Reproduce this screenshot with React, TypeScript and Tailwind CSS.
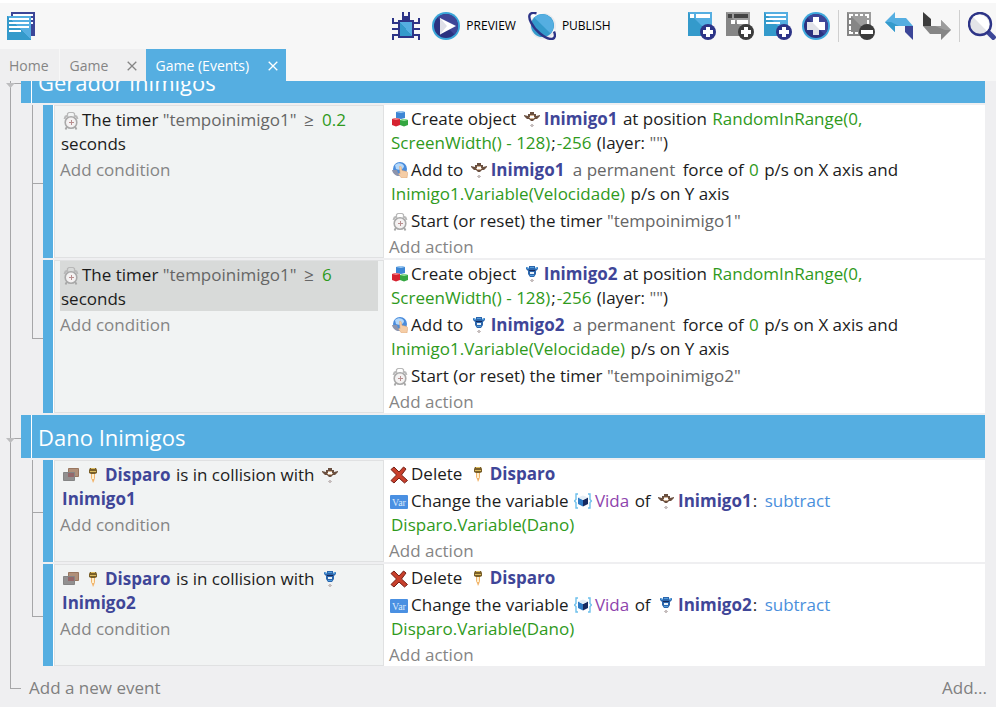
import type { ReactNode } from "react";

/* ---------- toolbar icons ---------- */

const big = { width: 28, height: 28, viewBox: "0 0 28 28", "aria-hidden": true, className: "block shrink-0" } as const;

function EventsIcon() {
  return (
    <svg {...big} shapeRendering="crispEdges">
      <path fill="#3c4698" d="M4 0h24v24H4z" />
      <path fill="#fff" d="M6 2h20v2H6zM24 6h2v2h-2zM24 10h2v2h-2z" />
      <path fill="#349acb" d="M0 4h24v24H0z" />
      <path fill="#55aee1" d="M0 4h24v24z" />
      <path fill="#fff" d="M2 6h20v2H2zM2 10h20v2H2zM2 14h20v2H2zM2 18h12v2H2z" />
    </svg>
  );
}

function BugIcon() {
  return (
    <svg {...big} shapeRendering="crispEdges">
      <path
        fill="#2d3487"
        d="M6 8h4V0h2v4h4V0h2v8h4v2h4V6h2v6h-6v4h6v2h-6v4h6v6h-2v-4h-4v2H6v-2H2v4H0v-6h6v-4H0v-2h6v-4H0V6h2v4h4z"
      />
      <path fill="#349acb" d="M8 10h12v14H8z" />
      <path fill="#55aee1" d="M8 10h12v14z" />
    </svg>
  );
}

function PlayIcon() {
  return (
    <svg {...big}>
      <circle cx="14" cy="14" r="14" fill="#3aa5d8" />
      <circle cx="14" cy="14" r="12" fill="#2b3280" />
      <path d="M5.5 5.500A12 12 0 0 1 22.500 22.500z" fill="#3f4698" />
      <path d="M8 6l16 8-16 8.500z" fill="#fff" />
      <path d="M8 6v16.500l7-8.500z" fill="#dfe0e8" />
    </svg>
  );
}

function PlanetIcon() {
  return (
    <svg {...big}>
      <circle cx="15" cy="14" r="13" fill="#e9e9ed" />
      <path d="M3 4C8 0 20 0 25 8l2 14z" fill="#fff" />
      <circle cx="14.500" cy="13.500" r="11.500" fill="#349acb" />
      <path d="M6.300 5.400A11.500 11.500 0 0 1 22.600 21.600z" fill="#55aee1" />
      <path
        d="M8.500 1.300C1.500-.3-.5 3.500 3 10.500c4 8 14 16.500 20.500 16.500 4 0 4-4 2.500-7.500"
        fill="none"
        stroke="#2d3487"
        strokeWidth="2.400"
      />
    </svg>
  );
}

function PlusBadge({ color }: { color: string }) {
  return (
    <g>
      <circle cx="20" cy="20" r="8" fill={color} />
      <path fill="#fff" d="M18 15h4v3h3v4h-3v3h-4v-3h-3v-4h3z" />
    </g>
  );
}

function AddEventIcon() {
  return (
    <svg {...big}>
      <path fill="#349acb" d="M0 0h24v24H0z" />
      <path fill="#55aee1" d="M0 0h24v24z" />
      <path fill="#fff" d="M2 2h4v4H2zM8 2h14v4H8z" />
      <PlusBadge color="#2d3487" />
    </svg>
  );
}

function AddSubEventIcon() {
  return (
    <svg {...big}>
      <path fill="#868686" d="M0 0h24v24H0z" />
      <path fill="#9c9c9c" d="M0 0h24v24z" />
      <path fill="#444" d="M2 2h4v4H2zM8 2h14v4H8z" />
      <path fill="#fff" d="M5 8h4v4H5zM11 8h11v4H11z" />
      <PlusBadge color="#3c3c3c" />
    </svg>
  );
}

function AddCommentIcon() {
  return (
    <svg {...big}>
      <path fill="#349acb" d="M0 0h24v24H0z" />
      <path fill="#55aee1" d="M0 0h24v24z" />
      <path fill="#fff" d="M2 2h20v2H2zM2 6h20v2H2zM2 10h14v2H2z" />
      <PlusBadge color="#2d3487" />
    </svg>
  );
}

function AddOtherIcon() {
  return (
    <svg {...big}>
      <circle cx="14" cy="14" r="14" fill="#3fa8dc" />
      <circle cx="14" cy="14" r="12" fill="#2b3280" />
      <path d="M5.500 5.500A12 12 0 0 1 22.500 22.500z" fill="#3f4698" />
      <path fill="#fff" d="M11 5h6v5h6v8h-6v5h-6v-5H5v-8h6z" />
      <path fill="#e1e2e8" d="M5 10h5l8 8h-1v5h-6v-5H5z" />
    </svg>
  );
}

function RemoveIcon() {
  return (
    <svg {...big}>
      <path fill="#868686" d="M0 0h24v24H0z" />
      <path fill="#9c9c9c" d="M0 0h24v24z" />
      <path
        fill="none"
        stroke="#fff"
        strokeWidth="2"
        d="M3 6V3h3M8 3h3M13 3h3M18 3h3v3M3 8v4M3 14v4M3 19v2h3M8 21h3M21 8v4"
      />
      <circle cx="20" cy="20" r="8" fill="#3c3c3c" />
      <path fill="#fff" d="M14 18h12v4H14z" />
    </svg>
  );
}

function UndoIcon() {
  return (
    <svg {...big}>
      <path fill="#3c4698" d="M20 14h8v14l-8-8z" />
      <path fill="#55aee1" d="M0 10L10 0v6h11l7 8H10v6z" />
      <path fill="#349acb" d="M0 10h6l8 4h-4v6z" />
    </svg>
  );
}

function RedoIcon() {
  return (
    <svg {...big}>
      <path fill="#3c3c3c" d="M0 0l8 7v7H0z" />
      <path fill="#868686" d="M0 14h18V8l10 10-10 10v-6H7z" />
      <path fill="#9c9c9c" d="M12 14h6V8l10 10h-6z" />
    </svg>
  );
}

function SearchIcon() {
  return (
    <svg {...big}>
      <path d="M19 19l8 8" stroke="#3c4698" strokeWidth="5" />
      <circle cx="12" cy="12" r="11" fill="#e3e4e8" stroke="#2d3487" strokeWidth="2.400" />
      <path d="M5.100 5.100A9.800 9.800 0 0 1 18.900 18.900z" fill="#fff" />
    </svg>
  );
}

/* ---------- instruction icons ---------- */

const small = { width: 16, height: 16, viewBox: "0 0 16 16", "aria-hidden": true } as const;
const lead = "ml-[2px] mr-[3px] inline-block align-[-2px]";
const sprite = "mx-[3px] inline-block align-[-2px]";

function Clock() {
  return (
    <svg width="16" height="18" viewBox="0 0 16 18" aria-hidden className="ml-[2px] mr-[3px] inline-block align-[-4px]">
      <path d="M4.500 4.500V1.500l1.500-1h4l1.500 1v3" fill="none" stroke="#b8b8b8" strokeWidth="1.200" />
      <path d="M1.500 7l1-2.500L5 3.500M14.500 7l-1-2.500L11 3.500" fill="none" stroke="#b9b9b9" strokeWidth="2" />
      <path d="M2.500 17.500l1.500-3M13.500 17.500l-1.500-3" stroke="#a8a8a8" strokeWidth="1.800" />
      <circle cx="8" cy="10.500" r="5.800" fill="#f4f2f2" stroke="#a9a9a9" strokeWidth="1.600" />
      <path d="M8.500 8v5M6 10.500h5" stroke="#b98f8f" />
    </svg>
  );
}

function Cubes() {
  return (
    <svg {...small} className={lead}>
      <path fill="#3d86d4" d="M4 1l5-1 4 1v6l-4 1-5-1z" />
      <path fill="#9fcbf2" d="M4 1l5-1 4 1-4 1z" />
      <path fill="#d62230" d="M0 8l4-1 4 1v6l-4 1.500L0 14z" />
      <path fill="#f0848a" d="M0 8l4-1 4 1-4 1z" />
      <path fill="#34a640" d="M8 9l4-1 4 1v5l-4 1.500L8 14z" />
      <path fill="#97e398" d="M8 9l4-1 4 1-4 1z" />
    </svg>
  );
}

function Force() {
  return (
    <svg {...small} className={lead}>
      <circle cx="8" cy="7" r="7" fill="#4a8cdc" />
      <path d="M3 3c3-3 8-2 9 1 0 3-5 5-8 3z" fill="#b4d8fa" />
      <path d="M0 8c1 4 4 6 7 6l-2-6z" fill="#8d94ac" />
      <path d="M7.500 4.500c1-.5 1.700 0 1.900 1l.6 3 4 .8c1.500.4 1.800 1.200 1.600 2.700L15 16H9.500l-3-3.800c0-1 .8-1.200 1.600-.7z" fill="#f5cda6" stroke="#dba272" strokeWidth=".5" />
    </svg>
  );
}

function Collision() {
  return (
    <svg {...small} className={lead}>
      <path fill="#b0907a" stroke="#98765f" d="M5.500 1.500h10v8h-10z" />
      <path fill="#929090" stroke="#858585" d="M.5 5.500h11v8H.5z" />
      <path fill="#94686a" d="M5 6h6v4H5z" />
    </svg>
  );
}

function Cross() {
  return (
    <svg width="18" height="18" viewBox="0 0 18 18" aria-hidden className="mr-[3px] inline-block align-[-4px]">
      <path
        d="M1 3.500L4 1l5 5 4.500-5L16 3l-4.500 6 6 5.500L14.500 17 9 12l-5 5-3-2.500L6.500 9z"
        fill="#c8402c"
        stroke="#742018"
        strokeWidth="1"
      />
    </svg>
  );
}

function VarIcon() {
  return (
    <svg width="18" height="14" viewBox="0 0 18 14" aria-hidden className="mr-[3px] inline-block align-[-2px]">
      <rect width="18" height="14" rx="1" fill="#4a90e2" />
      <text x="9" y="11" textAnchor="middle" fontSize="10" fontFamily="Liberation Serif, serif" fill="#dceafb">
        Var
      </text>
    </svg>
  );
}

function ObjectVar() {
  return (
    <svg width="18" height="16" viewBox="0 0 18 16" aria-hidden className="ml-px mr-[2px] inline-block align-[-2px]">
      <path d="M4 1H2v5.500L.5 8 2 9.500V15h2M14 1h2v5.500L17.500 8 16 9.500V15h-2" fill="none" stroke="#6ec0ec" strokeWidth="1.400" />
      <path d="M4 4.500L9 7v6.500L4 11z" fill="#2f7ac4" />
      <path d="M14 4.500L9 7v6.500l5-2.500z" fill="#16295f" />
      <path d="M4 4.500L9 2.500l5 2L9 7z" fill="#e4eef6" />
    </svg>
  );
}

function BrownShip() {
  return (
    <svg {...small} className={sprite}>
      <path fill="#6a5040" d="M6 1h4v2h2v2l4-1v1l-3 3h-2l-2 2H7l-2-2H3L0 5V4l4 1V3h2z" />
      <path fill="#d0b090" d="M6 4h4v1H6zM5 6h1v1H5zM10 6h1v1h-1zM6 7h4v1H6z" />
      <path fill="#fff" d="M6 5h4v2H6z" />
      <path fill="#c6bebe" d="M7 13h2v1h1v1H9v1H7v-1H6v-1h1z" />
    </svg>
  );
}

function BlueShip() {
  return (
    <svg {...small} className={sprite}>
      <path fill="#2c66ac" d="M2 1l3 1V0h6v2l3-1v2l-2 2v3l-2 3H6L4 8V5L2 3z" />
      <path fill="#4f9bdc" d="M2 1l3 1v1H3zM14 1l-3 1v1h2zM6 1h4v1H6zM6 9h4v1H6z" />
      <path fill="#16295a" d="M5 4h6v1H5z" />
      <path fill="#e9f1f8" d="M6 6h4v2H6z" />
      <path fill="#c6bebe" d="M7 13h2v1h1v1H9v1H7v-1H6v-1h1z" />
    </svg>
  );
}

function Shot() {
  return (
    <svg {...small} className={sprite}>
      <path fill="#7a5f28" d="M5 1h6l1 2v3l-2 1H6L4 6V3z" />
      <path fill="#dcbc60" d="M6 1h4v1H6zM5 4h6v1H5z" />
      <path fill="#f2b46a" d="M6 7h4v4l-1 3-1 2-1-3-1-2z" />
      <path fill="#fff0cf" d="M7 7h2v5H7z" />
    </svg>
  );
}

/* ---------- instruction text ---------- */

const Num = ({ children }: { children: ReactNode }) => <span className="mx-px text-[#2f9a1c]">{children}</span>;
const Par = ({ children }: { children: ReactNode }) => <span className="text-[#666]">{children}</span>;
const Choice = ({ children }: { children: ReactNode }) => <span className="mx-[3px] text-[#666]">{children}</span>;
const Obj = ({ children }: { children: ReactNode }) => <b className="mx-px font-bold text-[#3f4698]">{children}</b>;

function Enemy({ n }: { n: number }) {
  return (
    <>
      {n === 1 ? <BrownShip /> : <BlueShip />}
      <Obj>Inimigo{n}</Obj>
    </>
  );
}

function Instruction({ children, selected = false }: { children: ReactNode; selected?: boolean }) {
  return <div className={`mb-px whitespace-nowrap pl-px pt-[2px] ${selected ? "bg-[#d8dad9]" : ""}`}>{children}</div>;
}

function AddButton({ children }: { children: ReactNode }) {
  return <button className="block h-6 pt-px text-left text-[#858585]">{children}</button>;
}

function EventRow({ conditions, actions, last = false }: { conditions: ReactNode; actions: ReactNode; last?: boolean }) {
  return (
    <li className="flex">
      <div className="w-[22px] shrink-0 pl-[11px]">
        <div className="h-[calc(50%+1px)] border-b border-l border-[#a6a6a8]" />
        {!last && <div className="h-[calc(50%-1px)] border-l border-[#a6a6a8]" />}
      </div>
      <div className="mb-[2px] flex min-w-0 flex-1 bg-white">
        <div className="mr-px w-[10px] shrink-0 bg-[#55aee1]" />
        <div className="w-[330px] shrink-0 border border-[#e0e1e2] bg-[#f1f3f3] px-[5px]">
          {conditions}
          <AddButton>Add condition</AddButton>
        </div>
        <div className="min-w-0 flex-1 pl-[5px]">
          {actions}
          <AddButton>Add action</AddButton>
        </div>
      </div>
    </li>
  );
}

function Group({ title, children }: { title: string; children: ReactNode }) {
  return (
    <section className="flex">
      <div className="relative flex w-[21px] shrink-0 flex-col pl-[10px]">
        <div className="h-6 border-b border-l border-[#a6a6a8]" />
        <div className="flex-1 border-l border-[#a6a6a8]" />
        <svg width="9" height="5" viewBox="0 0 9 5" aria-hidden className="absolute left-[6px] top-[23px]">
          <path d="M0 0h9L4.500 5z" fill="#bdbdbf" />
        </svg>
      </div>
      <div className="min-w-0 flex-1">
        <div className="mb-[2px] flex h-[43px] items-center bg-[#55aee1]">
          <div className="w-[11px] shrink-0 self-stretch border-r border-white" />
          <h2 className="pl-[6px] pt-px text-[22px] leading-7 text-white">{title}</h2>
        </div>
        <ul>{children}</ul>
      </div>
    </section>
  );
}

function TimerEvent({ n, seconds, selected = false }: { n: number; seconds: string; selected?: boolean }) {
  return (
    <EventRow
      last={n === 2}
      conditions={
        <Instruction selected={selected}>
          <Clock />
          The timer <Par>"tempoinimigo1"</Par> <Choice>≥</Choice> <Num>{seconds}</Num>
          <br />
          seconds
        </Instruction>
      }
      actions={
        <>
          <Instruction>
            <Cubes />
            Create object <Enemy n={n} /> at position <Num>RandomInRange(0,</Num>
            <br />
            <Num>ScreenWidth() - 128)</Num>;<Num>-256</Num> (layer: <Par>""</Par>)
          </Instruction>
          <Instruction>
            <Force />
            Add to <Enemy n={n} /> <Choice>a permanent</Choice> force of <Num>0</Num> p/s on X axis and
            <br />
            <Num>Inimigo1.Variable(Velocidade)</Num> p/s on Y axis
          </Instruction>
          <Instruction>
            <Clock />
            Start (or reset) the timer <Par>"tempoinimigo{n}"</Par>
          </Instruction>
        </>
      }
    />
  );
}

function DamageEvent({ n }: { n: number }) {
  return (
    <EventRow
      last={n === 2}
      conditions={
        <Instruction>
          <Collision />
          <Shot />
          <Obj>Disparo</Obj> is in collision with {n === 1 ? <BrownShip /> : <BlueShip />}
          <br />
          <Obj>Inimigo{n}</Obj>
        </Instruction>
      }
      actions={
        <>
          <Instruction>
            <Cross />
            Delete <Shot />
            <Obj>Disparo</Obj>
          </Instruction>
          <Instruction>
            <VarIcon />
            Change the variable <ObjectVar />
            <span className="mx-px text-[#8e44ad]">Vida</span> of <Enemy n={n} />:{" "}
            <span className="mx-[3px] text-[#4a8fdc]">subtract</span>
            <br />
            <Num>Disparo.Variable(Dano)</Num>
          </Instruction>
        </>
      }
    />
  );
}

/* ---------- page ---------- */

function Tool({ label, children }: { label: string; children: ReactNode }) {
  return (
    <button aria-label={label} className="shrink-0">
      {children}
    </button>
  );
}

function CloseX() {
  return (
    <svg width="10" height="10" viewBox="0 0 10 10" aria-hidden>
      <path d="M.7.700l8.600 8.600M9.300.700L.7 9.300" stroke="currentColor" strokeWidth="1.300" />
    </svg>
  );
}

export default function App() {
  return (
    <div className="flex min-h-screen flex-col overflow-hidden bg-[#efeff1] font-['Open_Sans','Noto_Sans',sans-serif] text-[17px] leading-6 text-[#1c1c1c]">
      <header className="grid h-[49px] grid-cols-[1fr_auto_1fr] items-center border-t-[3px] border-white bg-[#f7f7f7] pl-[7px]">
        <div className="flex">
          <Tool label="Project manager">
            <EventsIcon />
          </Tool>
        </div>
        <div className="flex items-center gap-3 text-[12px] text-black">
          <Tool label="Debugger">
            <BugIcon />
          </Tool>
          <button className="flex items-center gap-[6px]">
            <PlayIcon />
            PREVIEW
          </button>
          <button className="flex items-center gap-[6px]">
            <PlanetIcon />
            PUBLISH
          </button>
        </div>
        <div className="flex items-center justify-end">
          <div className="flex gap-[10px] pr-2">
            <Tool label="Add event">
              <AddEventIcon />
            </Tool>
            <Tool label="Add sub-event">
              <AddSubEventIcon />
            </Tool>
            <Tool label="Add comment">
              <AddCommentIcon />
            </Tool>
            <Tool label="Add other event">
              <AddOtherIcon />
            </Tool>
          </div>
          <div className="flex gap-[10px] border-x border-[#cfcfcf] px-2 py-[2px]">
            <Tool label="Delete selection">
              <RemoveIcon />
            </Tool>
            <Tool label="Undo">
              <UndoIcon />
            </Tool>
            <Tool label="Redo">
              <RedoIcon />
            </Tool>
          </div>
          <div className="flex pl-2">
            <Tool label="Search">
              <SearchIcon />
            </Tool>
          </div>
        </div>
      </header>

      <nav className="flex h-8 bg-[#f7f7f7] text-[14px] text-[#858585]">
        <button className="mr-px bg-[#efeff0] pl-[9px] pr-[10px] pt-px">Home</button>
        <div className="flex w-[86px] items-center justify-between bg-[#efeff0] pl-[10px] pr-[9px] pt-px">
          <button>Game</button>
          <button aria-label="Close Game">
            <CloseX />
          </button>
        </div>
        <div className="flex w-[140px] items-center justify-between bg-[#55aee1] pl-[10px] pr-[8px] pt-px text-white">
          <button>Game (Events)</button>
          <button aria-label="Close Game (Events)">
            <CloseX />
          </button>
        </div>
      </nav>

      <main className="flex-1 overflow-hidden">
        <div className="-mt-[21px] pr-[11px]">
          <Group title="Gerador Inimigos">
            <TimerEvent n={1} seconds="0.2" />
            <TimerEvent n={2} seconds="6" selected />
          </Group>
          <Group title="Dano Inimigos">
            <DamageEvent n={1} />
            <DamageEvent n={2} />
          </Group>
        </div>
        <footer className="flex pl-[10px] pr-[9px] text-[#808080]">
          <div className="mr-2 h-[21px] w-[11px] border-b border-l border-[#a6a6a8]" />
          <button className="pt-2">Add a new event</button>
          <button className="ml-auto pt-2">Add...</button>
        </footer>
      </main>
    </div>
  );
}
